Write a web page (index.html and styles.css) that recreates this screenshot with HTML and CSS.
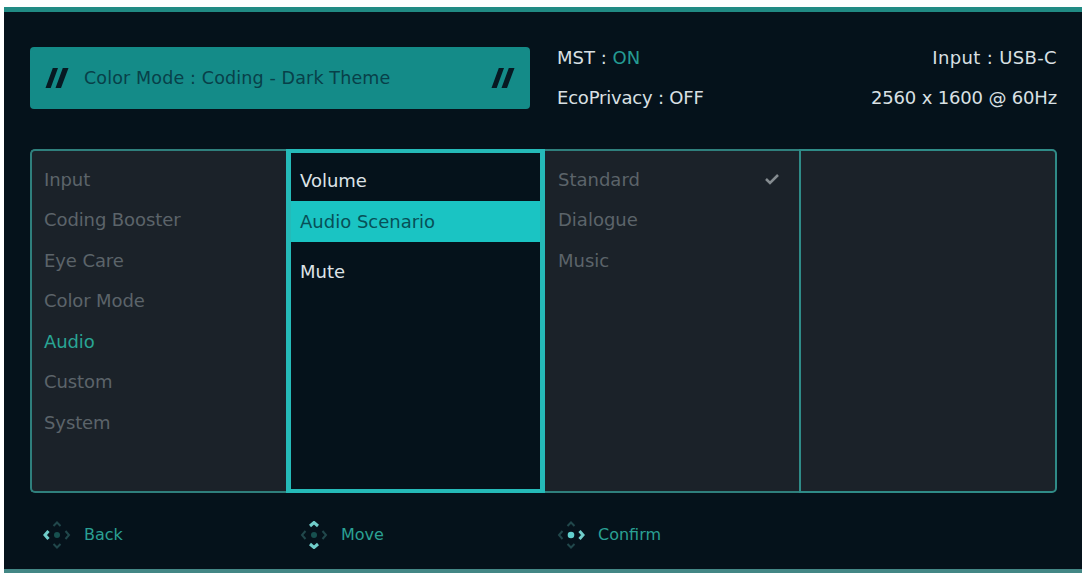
FILE: index.html
```
<!DOCTYPE html>
<html lang="en">
<head>
  <meta charset="UTF-8">
  <meta name="viewport" content="width=device-width, initial-scale=1">
  <title>Monitor OSD - Audio</title>
  <link rel="stylesheet" href="styles.css">
</head>
<body>

<div class="screen">
  <!-- Current mode and signal info -->
  <header>
    <div class="banner">
      <svg class="slashes" viewBox="0 0 24 20"><path d="M0.500 20L7.800 0H13L5.700 20ZM10.500 20L17.800 0H23.500L16 20Z"/></svg>
      <h1>Color Mode : Coding - Dark Theme</h1>
      <svg class="slashes" viewBox="0 0 24 20"><path d="M0.500 20L7.800 0H13L5.700 20ZM10.500 20L17.800 0H23.500L16 20Z"/></svg>
    </div>
    <div class="status">
      <p>MST : <span class="on">ON</span></p>
      <p class="eco">EcoPrivacy : OFF</p>
    </div>
    <div class="status signal">
      <p class="source">Input : USB-C</p>
      <p class="resolution">2560 x 1600 @ 60Hz</p>
    </div>
  </header>

  <!-- Menu columns -->
  <main class="menu">
    <ul class="column">
      <li>Input</li>
      <li>Coding Booster</li>
      <li>Eye Care</li>
      <li>Color Mode</li>
      <li class="current">Audio</li>
      <li>Custom</li>
      <li>System</li>
    </ul>
    <ul class="column active">
      <li>Volume</li>
      <li class="selected">Audio Scenario</li>
      <li class="spaced">Mute</li>
    </ul>
    <ul class="column options">
      <li>Standard
        <svg class="check" viewBox="0 0 16 12"><path d="M2 6L6 10L14 2"/></svg>
      </li>
      <li>Dialogue</li>
      <li>Music</li>
    </ul>
    <div class="column empty"></div>
  </main>

  <!-- Key hints -->
  <footer>
    <div class="hint">
      <svg class="keys" viewBox="0 0 28 28">
        <path class="lit" d="M5.500 10L2 14L5.500 18"/>
        <path d="M22.500 10L26 14L22.500 18"/>
        <path d="M10.500 5L14 1.500L17.500 5"/>
        <path d="M10.500 23L14 26.500L17.500 23"/>
        <circle cx="14" cy="14" r="3"/>
      </svg>
      <span>Back</span>
    </div>
    <div class="hint">
      <svg class="keys" viewBox="0 0 28 28">
        <path d="M5.500 10L2 14L5.500 18"/>
        <path d="M22.500 10L26 14L22.500 18"/>
        <path class="lit" d="M10 5L14 1.500L18 5"/>
        <path class="lit" d="M10 23L14 26.500L18 23"/>
        <circle cx="14" cy="14" r="3"/>
      </svg>
      <span>Move</span>
    </div>
    <div class="hint">
      <svg class="keys" viewBox="0 0 28 28">
        <path d="M5.500 10L2 14L5.500 18"/>
        <path class="lit" d="M22.500 10L26 14L22.500 18"/>
        <path d="M10.500 5L14 1.500L17.500 5"/>
        <path d="M10.500 23L14 26.500L17.500 23"/>
        <circle class="lit" cx="14" cy="14" r="3.300"/>
      </svg>
      <span>Confirm</span>
    </div>
  </footer>
</div>

</body>
</html>
```
FILE: styles.css
```
* {
  box-sizing: border-box;
}
body {
  margin: 0;
  padding: 7px 2px 0 4px;
  height: 573px;
  overflow: hidden;
  background: #fff;
  font-family: "DejaVu Sans", Verdana, sans-serif;
  font-size: 18px;
  color: #d9e0e4;
}
h1, p, ul {
  margin: 0;
  padding: 0;
  font-size: 18px;
  font-weight: normal;
}
.screen {
  height: 566px;
  padding: 35px 25px 0 26px;
  background: #05121b;
  border-top: 5px solid #218b84;
  border-bottom: 4px solid #438785;
}

/* Header */
header {
  display: grid;
  grid-template-columns: 500px 1fr 1fr;
  height: 102px;
}
.banner {
  display: flex;
  align-items: center;
  height: 62px;
  padding: 0 15px;
  background: #148b88;
  border-radius: 4px;
}
.banner h1 {
  flex: 1;
  padding-left: 15px;
  color: #084049;
  font-size: 17.500px;
  letter-spacing: 0.14px;
}
.slashes {
  width: 24px;
  height: 20px;
  fill: #071922;
}
.status {
  padding: 0 0 0 27px;
  line-height: 40px;
  margin-top: -9px;
  white-space: nowrap;
}
.status .on {
  color: #249b93;
}
.status .eco {
  letter-spacing: -0.2px;
}
.status .source {
  letter-spacing: 0.35px;
}
.status .resolution {
  letter-spacing: -0.17px;
}
.signal {
  padding: 0;
  text-align: right;
}

/* Menu */
.menu {
  display: grid;
  grid-template-columns: 256px 259px 254px 1fr;
  height: 344px;
  background: #1b2229;
  border-radius: 5px;
}
.column {
  list-style: none;
  padding: 8px 12px;
  border: 2px solid #2f7f7c;
  border-right: none;
  border-radius: 5px 0 0 5px;
  color: #5c646a;
  letter-spacing: -0.1px;
}
.column li {
  display: flex;
  align-items: center;
  height: 40.500px;
}
.column .current {
  color: #29a594;
}
.column.active {
  padding: 7px 0;
  background: #05121b;
  border: 5px solid #25bab8;
  border-top-width: 4px;
  border-bottom-width: 4px;
  border-radius: 0;
  color: #dde3e7;
  letter-spacing: 0;
}
.active li {
  padding-left: 9px;
}
.active .selected {
  height: 41px;
  background: #1ac4c3;
  color: #075057;
}
.active .spaced {
  margin-top: 10px;
}
.column.options {
  padding-left: 13px;
  border-left: none;
  border-radius: 0;
  letter-spacing: 0;
}
.options li {
  justify-content: space-between;
}
.check {
  width: 16px;
  height: 12px;
  margin-right: 7px;
  fill: none;
  stroke: #858c90;
  stroke-width: 2.500;
}
.column.empty {
  border: 2px solid #2f8b87;
  border-radius: 0 5px 5px 0;
}

/* Key hints */
footer {
  display: grid;
  grid-template-columns: 257px 257px 1fr;
  height: 83px;
  padding-left: 13px;
  font-size: 16px;
  color: #2aa094;
}
.hint {
  display: flex;
  align-items: center;
  gap: 13px;
}
.keys {
  width: 28px;
  height: 28px;
  fill: none;
  stroke: #21474b;
  stroke-width: 2;
}
.keys circle {
  fill: #17504f;
  stroke: none;
}
.keys path.lit {
  stroke: #70cdca;
  stroke-width: 3;
}
.keys circle.lit {
  fill: #62d0ce;
}
```
